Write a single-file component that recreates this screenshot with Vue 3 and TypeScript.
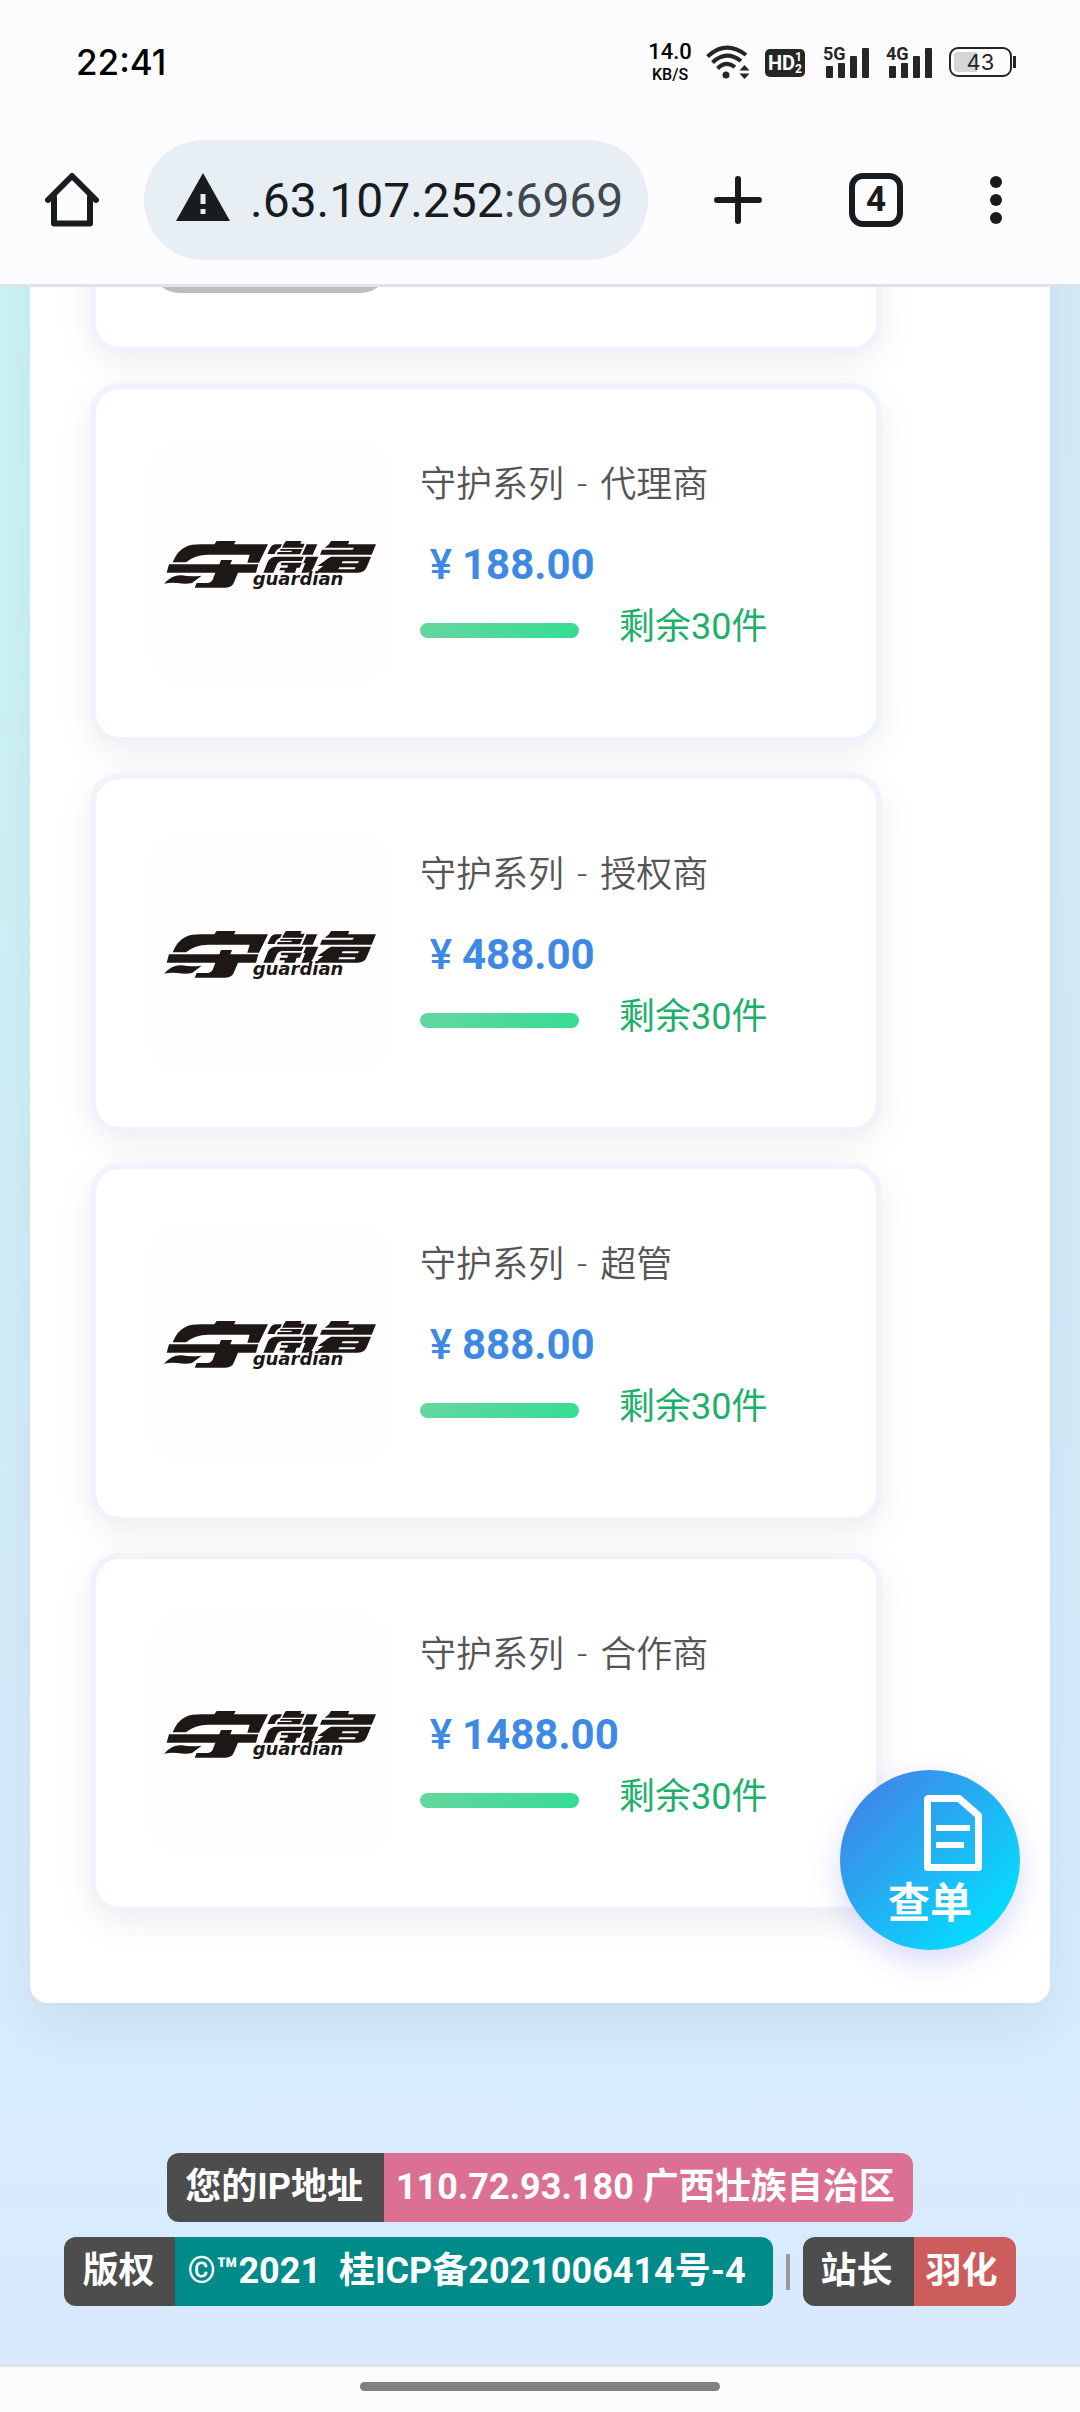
<script setup lang="ts">
interface Product {
  name: string
  price: string
  stock: number
}

const series = '守护系列'

const products: Product[] = [
  { name: '代理商', price: '188.00', stock: 30 },
  { name: '授权商', price: '488.00', stock: 30 },
  { name: '超管', price: '888.00', stock: 30 },
  { name: '合作商', price: '1488.00', stock: 30 },
]

const networks = ['5G', '4G']
</script>

<template>
  <div class="screen">
    <header class="chrome">
      <div class="status">
        <time class="clock">22:41</time>
        <div class="indicators">
          <div class="speed"><span class="rate">14.0</span><span class="unit">KB/S</span></div>
          <svg class="wifi" viewBox="0 0 44 34" aria-hidden="true">
            <g fill="none" stroke="#262626" stroke-width="4">
              <path d="M1.500 11.500Q20 -5.500 40 10" />
              <path d="M6.500 17.500Q20 4.500 35 16" />
              <path d="M11.500 23.500Q20 15 29 22" />
            </g>
            <circle cx="20" cy="30" r="3.500" fill="#262626" />
            <path d="M38.500 20l5 5.500h-10zM38.500 34l5-5.500h-10z" fill="#262626" />
          </svg>
          <span class="hd">HD<span class="sims"><i>1</i><i>2</i></span></span>
          <span v-for="network in networks" :key="network" class="signal">
            <b>{{ network }}</b>
            <svg viewBox="0 0 44 30" aria-hidden="true">
              <g fill="#262626">
                <rect x="0" y="18" width="7" height="12" rx="1" />
                <rect x="12" y="15" width="7" height="15" rx="1" />
                <rect x="24" y="8" width="7" height="22" rx="1" />
                <rect x="36" y="0" width="7" height="30" rx="1" />
              </g>
            </svg>
          </span>
          <span class="battery"><span class="cell">43</span></span>
        </div>
      </div>
      <div class="toolbar">
        <button class="tool" type="button" aria-label="Home">
          <svg viewBox="0 0 54 56" width="54" height="56" fill="none" stroke="#191c1e" stroke-width="6" stroke-linecap="round" stroke-linejoin="round">
            <path d="M3 28L27 4l24 24" />
            <path d="M9 25v26.500h36V25" />
          </svg>
        </button>
        <button class="address" type="button">
          <svg viewBox="0 0 54 48" width="54" height="48" aria-hidden="true">
            <path d="M27 0l27 48H0z" fill="#191c1e" />
            <path d="M24.500 21h5v10h-5zM24.500 36h5v5h-5z" fill="#e7eef4" />
          </svg>
          <span class="host">.63.107.252<span class="port">:6969</span></span>
        </button>
        <div class="tools">
          <button class="tool" type="button" aria-label="New tab">
            <svg viewBox="0 0 48 48" width="48" height="48" fill="none" stroke="#191c1e" stroke-width="6" stroke-linecap="round">
              <path d="M24 3v42M3 24h42" />
            </svg>
          </button>
          <button class="tool tabs" type="button" aria-label="Open tabs">4</button>
          <button class="tool" type="button" aria-label="Menu">
            <svg viewBox="0 0 12 50" width="12" height="50" fill="#191c1e">
              <circle cx="6" cy="7" r="6" />
              <circle cx="6" cy="25" r="6" />
              <circle cx="6" cy="43" r="6" />
            </svg>
          </button>
        </div>
      </div>
    </header>

    <main class="viewport">
      <section class="panel">
        <article class="card"><div class="thumb sold"></div></article>
        <article v-for="product in products" :key="product.name" class="card">
          <div class="thumb">
            <svg viewBox="0 -234 720 720" role="img" aria-label="guardian">
              <g fill="#1d1815">
                <path d="M68 124Q82 88 108 77Q124 70 152 70H193L200 60H257L252 70H354L327 125H292L299 101H175Q134 101 108 124Z" />
                <path d="M57 130H208L213 117H246L241 130H325L318 155H264L252 184Q246 200 226 200H134L140 186H172Q184 185 188 176L196 155H50Z" />
                <path d="M42 188Q68 160 96 163Q120 168 155 164L126 186Q108 191 82 186Q62 184 42 188Z" />
                <path d="M352 99L361 80Q366 71 378 70H396L391 80Q380 82 374 99Z" />
                <path d="M402 68L408 60H455L451 68H464L459 80H396Z" />
                <path d="M392 84H457L450 100H380L384 93H424L426 89H390Z" />
                <path d="M470 70H502L488 101H456Z" />
                <path d="M340 155L354 121Q361 107 380 107H461L455 120H396Q384 122 380 132L370 155Z" />
                <path d="M394 125H456L449 140H440L435 155H402L405 148H388L391 140H412L414 133H392Z" />
                <path d="M468 107H505L490 141Q484 155 468 155H454L466 126H460Z" />
                <path d="M537 70L543 60H598L594 70H678L665 101H510L516 86H608L612 80H524Z" />
                <path d="M544 107H663L650 139Q643 155 624 155H500L505 146L520 135H502L524 120Q538 108 544 107ZM578 121L575 127H624L627 121ZM568 139L565 145H614L617 139Z" fill-rule="evenodd" />
              </g>
              <text x="308" y="193" class="wordmark">guardian</text>
            </svg>
          </div>
          <div class="info">
            <h2 class="title"><span>{{ series }}</span><span>-</span><span>{{ product.name }}</span></h2>
            <p class="price"><span class="yen">¥</span>{{ product.price }}</p>
            <div class="stock">
              <span class="bar"></span>
              <span>剩余{{ product.stock }}件</span>
            </div>
          </div>
        </article>
      </section>

      <footer class="footer">
        <div class="line">
          <p class="badge"><span class="label">您的IP地址</span><span class="value pink">110.72.93.180 广西壮族自治区</span></p>
        </div>
        <div class="line">
          <a class="badge" href="#"><span class="label">版权</span><span class="value teal">©™2021&nbsp; 桂ICP备2021006414号-4&nbsp;</span></a>
          <span class="divider"></span>
          <a class="badge" href="#"><span class="label">站长</span><span class="value red">羽化</span></a>
        </div>
      </footer>

      <button class="query" type="button">
        <svg viewBox="0 0 58 76" width="58" height="76" fill="none" stroke="#fff" aria-hidden="true">
          <path d="M4 3.500H35L54.500 20.500V72.500H3.500V4Z" stroke-width="7" stroke-linejoin="round" />
          <path d="M12 33h34M12 50h28" stroke-width="6" />
        </svg>
        <span>查单</span>
      </button>
    </main>

    <div class="gesture"><span></span></div>
  </div>
</template>

<style>
body {
  background: #fcfcff;
}
</style>

<style scoped>
.screen {
  display: flex;
  flex-direction: column;
  height: 100vh;
  overflow: hidden;
  font-family: Roboto, "Noto Sans CJK SC", sans-serif;
  color: #191c1e;
}
button {
  margin: 0;
  padding: 0;
  border: 0;
  background: none;
  color: inherit;
  font-family: inherit;
}
svg {
  display: block;
  flex: none;
}

/* status bar and toolbar */
.chrome {
  flex: none;
  background: #fcfcff;
  border-bottom: 3px solid #dde4e8;
}
.status {
  display: flex;
  align-items: center;
  justify-content: space-between;
  height: 124px;
  padding: 0 64px 0 76px;
}
.clock {
  font: 500 35px/40px Inter, sans-serif;
  color: #000;
}
.indicators {
  display: flex;
  align-items: center;
  color: #262626;
}
.speed {
  display: flex;
  flex-direction: column;
  align-items: center;
  width: 46px;
  margin-right: 13px;
  font-weight: 500;
  color: #000;
}
.rate {
  font-size: 22px;
  line-height: 26px;
}
.unit {
  font-size: 16px;
  line-height: 20px;
}
.wifi {
  width: 44px;
  height: 34px;
  margin-right: 15px;
}
.hd {
  display: flex;
  align-items: center;
  justify-content: center;
  width: 40px;
  height: 28px;
  margin: 2px 18px 0 0;
  border-radius: 5px;
  background: #262626;
  color: #fff;
  font-size: 20px;
  font-weight: 700;
}
.sims {
  display: flex;
  flex-direction: column;
  font-size: 12px;
  line-height: 12px;
}
.sims i {
  font-style: normal;
}
.signal {
  position: relative;
  display: block;
  width: 46px;
  height: 34px;
  margin-right: 17px;
}
.signal svg {
  width: 44px;
  height: 30px;
  margin: 3px 0 0 3px;
}
.signal b {
  position: absolute;
  left: 0;
  top: 0;
  font-size: 18px;
  line-height: 18px;
}
.battery {
  display: flex;
  align-items: center;
}
.battery::after {
  content: "";
  width: 3px;
  height: 12px;
  margin-left: 1px;
  background: #262626;
}
.cell {
  box-sizing: border-box;
  width: 63px;
  height: 30px;
  border: 2px solid #262626;
  border-radius: 9px;
  padding: 3px;
  background: linear-gradient(90deg, #d6d6d8 43%, transparent 43%) content-box;
  text-align: center;
  font: 400 22px/20px Inter, sans-serif;
}
.toolbar {
  display: flex;
  align-items: center;
  height: 120px;
  padding: 16px 78px 24px 45px;
}
.tool {
  display: grid;
  place-items: center;
}
.address {
  flex: 1;
  display: flex;
  align-items: center;
  gap: 20px;
  height: 120px;
  margin: 0 66px 0 45px;
  padding: 0 20px 0 32px;
  border-radius: 60px;
  background: #e7eef4;
}
.address svg {
  margin-bottom: 6px;
}
.host {
  padding-top: 2px;
  font-size: 48px;
  line-height: 56px;
  white-space: nowrap;
}
.port {
  color: #40484f;
}
.tools {
  display: flex;
  align-items: center;
  gap: 87px;
}
.tabs {
  box-sizing: border-box;
  width: 54px;
  height: 54px;
  border: 6px solid #191c1e;
  border-radius: 14px;
  font-size: 35px;
  font-weight: 700;
  line-height: 42px;
}

/* page, scrolled to its end */
.viewport {
  position: relative;
  flex: 1;
  min-height: 0;
  display: flex;
  flex-direction: column;
  justify-content: flex-end;
  overflow: hidden;
  background:
    radial-gradient(ellipse 30% 60% at 0 10%, #cdf5f5, transparent),
    linear-gradient(180deg, #d5edf9 0, #d6ecfa 50%, #d8edfe 86%, #d9e9fe 100%);
}
.panel {
  display: flex;
  flex-direction: column;
  gap: 30px;
  margin: 0 30px;
  padding: 60px 168px 90px 60px;
  border-radius: 18px;
  background: #fff;
  box-shadow: 0 24px 66px rgba(0, 30, 60, 0.08);
}
.card {
  box-sizing: border-box;
  flex: none;
  display: flex;
  align-items: center;
  gap: 30px;
  height: 360px;
  padding: 0 54px;
  border: 6px solid #f0f3fa;
  border-radius: 30px;
  background: #fff;
  box-shadow: 0 10px 36px rgba(0, 0, 0, 0.07);
}
.thumb {
  flex: none;
  width: 240px;
  height: 240px;
  border-radius: 30px;
  overflow: hidden;
  background: #fefefe;
}
.sold {
  background: #bdbdbd;
}
.wordmark {
  font: italic 700 54px "DejaVu Sans", sans-serif;
  fill: #1d1815;
}
.info {
  flex: 1;
  padding-bottom: 14px;
}
.title {
  display: flex;
  gap: 13px;
  margin: 0;
  font-size: 36px;
  font-weight: 350;
  line-height: 54px;
  color: #555;
}
.price {
  margin: 23px 0 5px;
  font-size: 42px;
  font-weight: 700;
  line-height: 60px;
  color: #3d89e3;
}
.yen {
  display: inline-block;
  width: 42px;
  text-align: center;
  font-weight: 500;
}
.stock {
  display: flex;
  align-items: center;
  gap: 40px;
  font-size: 36px;
  line-height: 54px;
  color: #1db06b;
}
.bar {
  width: 159px;
  height: 15px;
  margin-top: 7px;
  border-radius: 8px;
  background: linear-gradient(135deg, #67d69d, #34dd93);
}

.footer {
  display: flex;
  flex-direction: column;
  gap: 15px;
  padding: 150px 0 58px;
}
.line {
  display: flex;
  align-items: center;
  justify-content: center;
}
.badge {
  display: flex;
  margin: 0;
  border-radius: 12px;
  overflow: hidden;
  color: #fff;
  font-size: 36px;
  font-weight: 700;
  line-height: 69px;
  text-decoration: none;
  white-space: nowrap;
}
.label {
  padding: 0 21px 0 18px;
  background: #4d4d4d;
}
.value {
  padding: 0 18px 0 12px;
}
.pink {
  background: #db7093;
}
.teal {
  background: #008b8b;
}
.red {
  background: #cd5c5c;
}
.divider {
  width: 4px;
  height: 36px;
  margin: 0 13px;
  background: #999;
}

/* floating order lookup */
.query {
  position: absolute;
  right: 60px;
  bottom: 414px;
  display: flex;
  flex-direction: column;
  align-items: center;
  width: 180px;
  height: 180px;
  padding-top: 25px;
  border-radius: 50%;
  background: linear-gradient(135deg, #3f87e8 12%, #05dcff 86%);
  box-shadow: 0 12px 30px rgba(90, 90, 240, 0.22);
  color: #fff;
  font-size: 42px;
  font-weight: 700;
  line-height: 66px;
}
.query svg {
  margin-left: 46px;
}

.gesture {
  flex: none;
  display: flex;
  justify-content: center;
  height: 30px;
  padding-top: 15px;
  border-top: 3px solid #dde4e8;
  background: #fcfcff;
}
.gesture span {
  width: 360px;
  max-width: 50%;
  height: 9px;
  border-radius: 5px;
  background: #808080;
}
</style>
